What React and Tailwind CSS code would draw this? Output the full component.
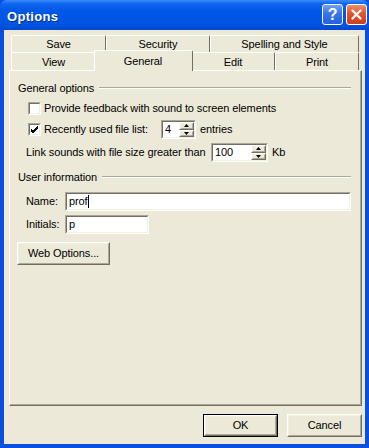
import React from "react";

function Raised({ className = "", children }) {
  return (
    <div className={"border border-t-white border-l-white border-r-[#716f64] border-b-[#716f64] " + className}>
      <div className="h-full w-full border border-t-[#f1efe2] border-l-[#f1efe2] border-r-[#aca899] border-b-[#aca899] bg-[#ece9d8] flex items-center justify-center">
        {children}
      </div>
    </div>
  );
}

function Sunken({ className = "", children }) {
  return (
    <div className={"border border-t-[#aca899] border-l-[#aca899] border-r-white border-b-white " + className}>
      <div className="h-full w-full border border-t-[#716f64] border-l-[#716f64] border-r-[#f1efe2] border-b-[#f1efe2] bg-white flex items-center">
        {children}
      </div>
    </div>
  );
}

function Checkbox({ checked }) {
  return (
    <Sunken className="w-[13px] h-[13px] shrink-0">
      {checked && (
        <svg width="9" height="9" viewBox="0 0 9 9" className="block">
          <path d="M1 4 L3 6 L8 1 M1 5 L3 7 L8 2 M1 6 L3 8 L8 3" stroke="#000" strokeWidth="1" fill="none" />
        </svg>
      )}
    </Sunken>
  );
}

function Spin({ className = "", value }) {
  return (
    <Sunken className={"h-[19px] " + className}>
      <span className="pl-[2px] flex-1 leading-none">{value}</span>
      <div className="flex flex-col h-full w-[15px]">
        <Raised className="h-1/2 w-full">
          <svg width="5" height="3" viewBox="0 0 5 3"><path d="M2.5 0 L5 3 L0 3 Z" fill="#000" /></svg>
        </Raised>
        <Raised className="h-1/2 w-full">
          <svg width="5" height="3" viewBox="0 0 5 3"><path d="M0 0 L5 0 L2.5 3 Z" fill="#000" /></svg>
        </Raised>
      </div>
    </Sunken>
  );
}

function Tab({ label, w, selected }) {
  if (selected) {
    return (
      <div className={"relative z-10 -mt-[2px] -mx-[2px] h-[21px] bg-[#ece9d8] border-t border-l border-white rounded-tl-[2px] rounded-tr-[2px] border-r border-r-[#716f64] flex items-start justify-center pt-[2px] " + w}>
        <span className="mr-[1px]">{label}</span>
      </div>
    );
  }
  return (
    <div className={"h-full bg-[#ece9d8] border-t border-l border-white border-r border-r-[#716f64] rounded-tl-[2px] rounded-tr-[2px] flex items-center justify-center pt-[1px] " + w}>
      {label}
    </div>
  );
}

function GroupTitle({ label }) {
  return (
    <div className="flex items-center h-[14px] ml-[8px] mr-[9px]">
      <span>{label}</span>
      <div className="flex-1 ml-[5px] border-t border-t-[#aca899] border-b border-b-white" />
    </div>
  );
}

export default function App() {
  return (
    <div className="w-[369px] h-[448px] flex flex-col bg-[#0b4fdf] text-[11px] text-black font-['Liberation_Sans',Tahoma,sans-serif] tracking-[-0.1px] overflow-hidden">
      <div className="h-[30px] shrink-0 flex items-start bg-[linear-gradient(180deg,#3d8efc_0%,#1266f1_12%,#0058e6_35%,#0054e2_80%,#0049d0_100%)] rounded-t-[7px]">
        <span className="ml-[7px] mt-[7px] text-white font-bold text-[13px] tracking-[0.3px] [text-shadow:1px_1px_0_#0a2f8a]">Options</span>
        <div className="ml-auto mt-[4px] mr-[2px] flex gap-[3px]">
          <div className="w-[21px] h-[21px] rounded-[3px] border border-white bg-[linear-gradient(180deg,#6ea0f8_0%,#3a74ea_45%,#2461df_100%)] flex items-center justify-center text-white font-bold text-[16px] leading-none">?</div>
          <div className="w-[21px] h-[21px] rounded-[3px] border border-white bg-[linear-gradient(180deg,#ee8e70_0%,#e0552f_45%,#cd3e1b_100%)] flex items-center justify-center">
            <svg width="11" height="11" viewBox="0 0 11 11">
              <path d="M1.5 1.5 L9.5 9.5 M9.5 1.5 L1.5 9.5" stroke="#fff" strokeWidth="2.2" strokeLinecap="round" />
            </svg>
          </div>
        </div>
      </div>

      <div className="flex-1 mx-[4px] mb-[4px] bg-[#ece9d8] flex flex-col">
        <div className="ml-[7px] mt-[5px] w-[348px]">
          <div className="flex h-[17px]">
            <Tab label="Save" w="w-[95px]" />
            <Tab label="Security" w="w-[104px]" />
            <Tab label="Spelling and Style" w="w-[149px]" />
          </div>
          <div className="flex h-[18px]">
            <Tab label="View" w="w-[85px]" />
            <Tab label="General" w="w-[99px]" selected />
            <Tab label="Edit" w="w-[84px]" />
            <Tab label="Print" w="w-[84px]" />
          </div>
        </div>

        <div className="ml-[5px] w-[353px] h-[336px] border border-t-white border-l-white border-r-[#716f64] border-b-[#716f64]">
          <div className="h-full border-r border-b border-r-[#aca899] border-b-[#aca899] pt-[10px] flex flex-col">
            <GroupTitle label="General options" />

            <div className="flex items-center h-[18px] mt-[4px] ml-[18px]">
              <Checkbox />
              <span className="ml-[3px]">Provide feedback with sound to screen elements</span>
            </div>

            <div className="flex items-center h-[19px] mt-[3px] ml-[18px]">
              <Checkbox checked />
              <span className="ml-[3px] w-[117px]">Recently used file list:</span>
              <Spin className="w-[35px]" value="4" />
              <span className="ml-[4px]">entries</span>
            </div>

            <div className="flex items-center h-[19px] mt-[4px] ml-[16px]">
              <span className="w-[185px]">Link sounds with file size greater than</span>
              <Spin className="w-[57px]" value="100" />
              <span className="ml-[4px]">Kb</span>
            </div>

            <div className="mt-[8px]">
              <GroupTitle label="User information" />
            </div>

            <div className="flex items-center h-[19px] mt-[8px] ml-[16px] mr-[9px]">
              <span className="w-[39px]">Name:</span>
              <Sunken className="flex-1 h-full">
                <span className="pl-[2px]">prof</span>
                <span className="w-px h-[13px] bg-black" />
              </Sunken>
            </div>

            <div className="flex items-center h-[19px] mt-[4px] ml-[16px]">
              <span className="w-[39px]">Initials:</span>
              <Sunken className="w-[84px] h-full">
                <span className="pl-[2px]">p</span>
              </Sunken>
            </div>

            <Raised className="mt-[8px] ml-[7px] w-[93px] h-[23px]">
              <span>Web Options...</span>
            </Raised>
          </div>
        </div>

        <div className="flex mt-[8px] ml-[199px] gap-[9px]">
          <div className="w-[75px] h-[23px] border border-black">
            <Raised className="w-full h-full">
              <span>OK</span>
            </Raised>
          </div>
          <Raised className="w-[75px] h-[23px]">
            <span>Cancel</span>
          </Raised>
        </div>
      </div>
    </div>
  );
}
